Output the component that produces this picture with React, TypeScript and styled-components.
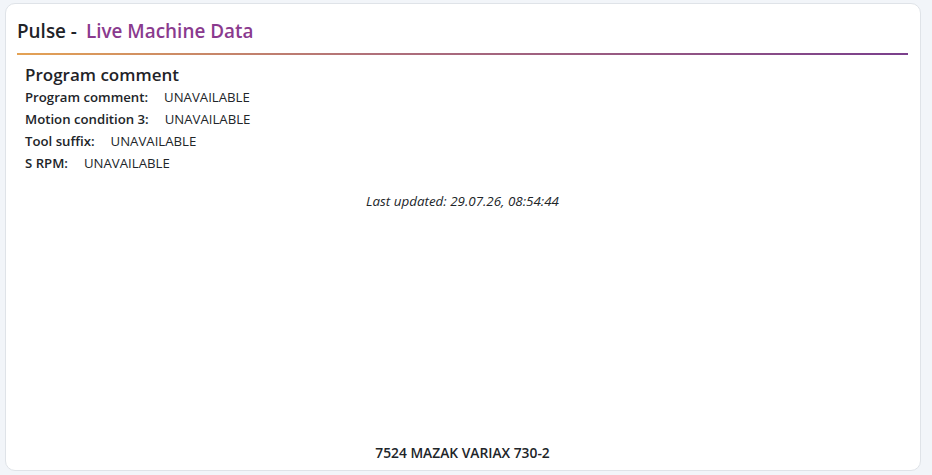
import React, { FC } from 'react'
import styled, { createGlobalStyle } from 'styled-components'

type Field = {
  key: string,
  label: string,
  value: string,
}

const fields: Field[] = [
  { key: 'comment', label: 'Program comment:', value: 'UNAVAILABLE' },
  { key: 'motion3', label: 'Motion condition 3:', value: 'UNAVAILABLE' },
  { key: 'suffix', label: 'Tool suffix:', value: 'UNAVAILABLE' },
  { key: 'srpm', label: 'S RPM:', value: 'UNAVAILABLE' },
]

const GlobalStyle = createGlobalStyle`
  html, body {
    margin: 0;
    padding: 0;
    background-color: #f2f5f9;
    font-family: "Open Sans", "Noto Sans", sans-serif;
    color: #212529;
  }
`

const Page = styled.div`
  height: 475px;
  box-sizing: border-box;
  padding: 3px 11px 4px 5px;
  display: flex;
`

const Card = styled.div`
  flex: 1;
  display: flex;
  flex-direction: column;
  background-color: #ffffff;
  border: 1px solid #dfe3e8;
  border-radius: 10px;
  padding: 0 12px 0 11px;
`

const Header = styled.div`
  display: flex;
  align-items: baseline;
  gap: 9px;
  padding-top: 15px;
  padding-bottom: 10px;
  font-size: 18.9px;
  line-height: 24px;
  font-weight: 600;
`

const Title = styled.span`
  color: #1f2328;
`

const Accent = styled.span`
  color: #8a3a8e;
`

const Divider = styled.div`
  height: 1.5px;
  background: linear-gradient(90deg, #e4a254 0%, #b0707a 40%, #7a3f8c 100%);
`

const Content = styled.div`
  flex: 1;
  display: flex;
  flex-direction: column;
  padding: 9px 8px 0 8px;
`

const SectionTitle = styled.div`
  font-size: 17px;
  line-height: 22px;
  font-weight: 600;
  color: #1f2328;
`

const Row = styled.div`
  display: flex;
  gap: 16px;
  font-size: 13.2px;
  line-height: 22px;
  color: #212529;
`

const Label = styled.span`
  font-weight: 600;
`

const Updated = styled.div`
  margin-top: 16px;
  text-align: center;
  font-style: italic;
  font-size: 13.4px;
  line-height: 22px;
  color: #212529;
`

const Footer = styled.div`
  margin-top: auto;
  padding-bottom: 6px;
  text-align: center;
  font-size: 13.8px;
  line-height: 22px;
  font-weight: 600;
  color: #212529;
`

const App: FC = () => {
  return (
    <>
      <GlobalStyle />
      <Page>
        <Card>
          <Header>
            <Title>Pulse -</Title>
            <Accent>Live Machine Data</Accent>
          </Header>
          <Divider />
          <Content>
            <SectionTitle>Program comment</SectionTitle>
            {fields.map(field => (
              <Row key={field.key}>
                <Label>{field.label}</Label>
                <span>{field.value}</span>
              </Row>
            ))}
            <Updated>Last updated: 29.07.26, 08:54:44</Updated>
            <Footer>7524 MAZAK VARIAX 730-2</Footer>
          </Content>
        </Card>
      </Page>
    </>
  )
}

export default App
